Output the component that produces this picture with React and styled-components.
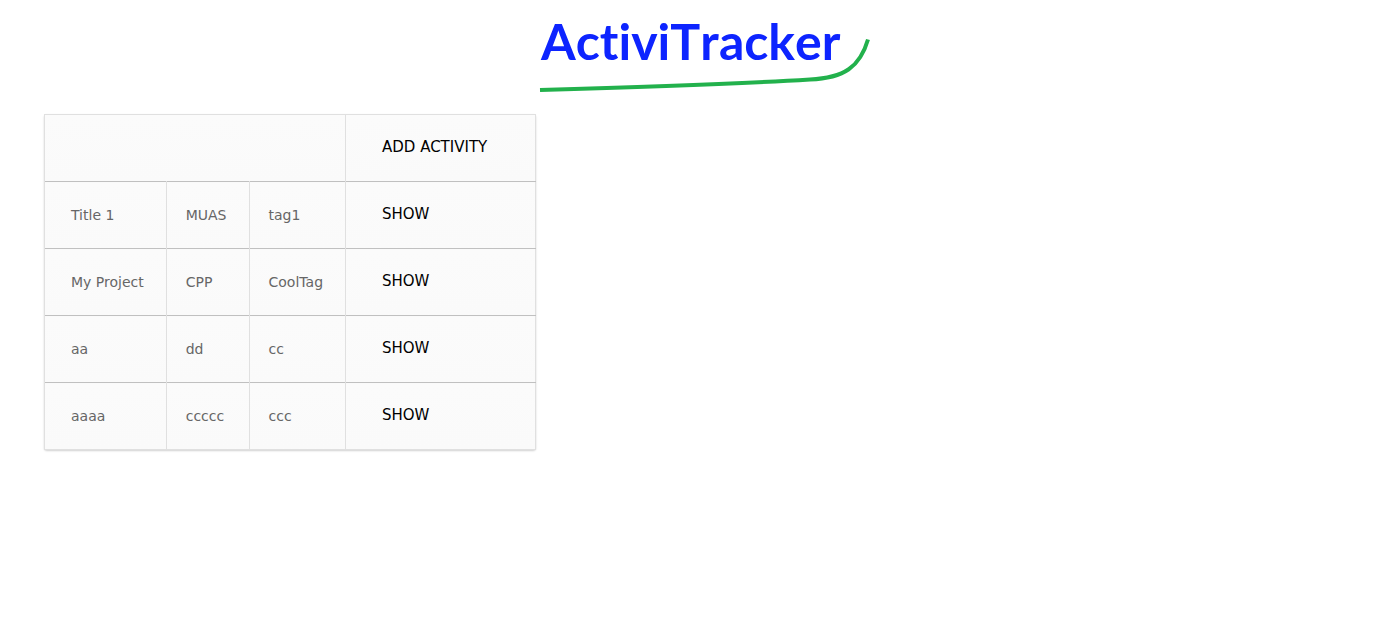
import React from "react";
import styled, { createGlobalStyle } from "styled-components";

const GlobalStyle = createGlobalStyle`
  body {
    margin: 0;
    background: #fff;
    font-family: "DejaVu Sans", Verdana, sans-serif;
  }
`;

const Header = styled.header`
  display: flex;
  justify-content: center;
  padding: 14px 0 18px 20px;
`;

const Title = styled.h1`
  margin: 0;
  line-height: 0;
`;

const Logo = styled.svg`
  width: 334px;
  height: 82px;
  overflow: visible;
`;

const LogoText = styled.text`
  font: 700 50px Lato, sans-serif;
  font-variant-ligatures: none;
  font-kerning: none;
  fill: #0d24ff;
`;

const Main = styled.main`
  padding: 0 44px 44px;
`;

const ActivityTable = styled.table`
  border-collapse: collapse;
  border: 1px solid #e0e0e0;
  border-radius: 3px;
  box-shadow: 0 1px 2px #d1d1d1;
  background: #fafafa;
  color: #666;
  font-size: 14px;
  line-height: 18px;
`;

const Row = styled.tr`
  height: 67px;
  background: linear-gradient(to bottom, #fbfbfb, #fafafa);

  & + & {
    border-top: 1px solid #c0c0c0;
  }
`;

const Cell = styled.td`
  box-sizing: border-box;
  padding: 0 22px 0 ${(p) => (p.$first ? 26 : 19)}px;
  border-left: 1px solid #e0e0e0;
  text-align: left;
`;

const ActionCell = styled(Cell)`
  padding: 0 48px 2px 36px;
`;

const Action = styled.button`
  display: block;
  padding: 0;
  border: 0;
  background: none;
  color: #000;
  font: 15px/20px "DejaVu Sans", Verdana, sans-serif;
  text-transform: uppercase;
  cursor: pointer;
`;

const activities = [
  ["Title 1", "MUAS", "tag1"],
  ["My Project", "CPP", "CoolTag"],
  ["aa", "dd", "cc"],
  ["aaaa", "ccccc", "ccc"],
];

export default function App() {
  return (
    <>
      <GlobalStyle />
      <Header>
        <Title>
          <Logo viewBox="0 0 334 82">
            <LogoText x="1" y="46">ActiviTracker</LogoText>
            <path
              d="M0 76 C90 73.5 190 70.5 270 65.5 C304 64 320 53 328 25.5"
              fill="none"
              stroke="#22b14c"
              strokeWidth="4"
            />
          </Logo>
        </Title>
      </Header>
      <Main>
        <ActivityTable>
          <tbody>
            <Row>
              <Cell colSpan={3} />
              <ActionCell>
                <Action type="button">Add activity</Action>
              </ActionCell>
            </Row>
            {activities.map(([title, project, tag]) => (
              <Row key={title}>
                <Cell $first>{title}</Cell>
                <Cell>{project}</Cell>
                <Cell>{tag}</Cell>
                <ActionCell>
                  <Action type="button">Show</Action>
                </ActionCell>
              </Row>
            ))}
          </tbody>
        </ActivityTable>
      </Main>
    </>
  );
}
